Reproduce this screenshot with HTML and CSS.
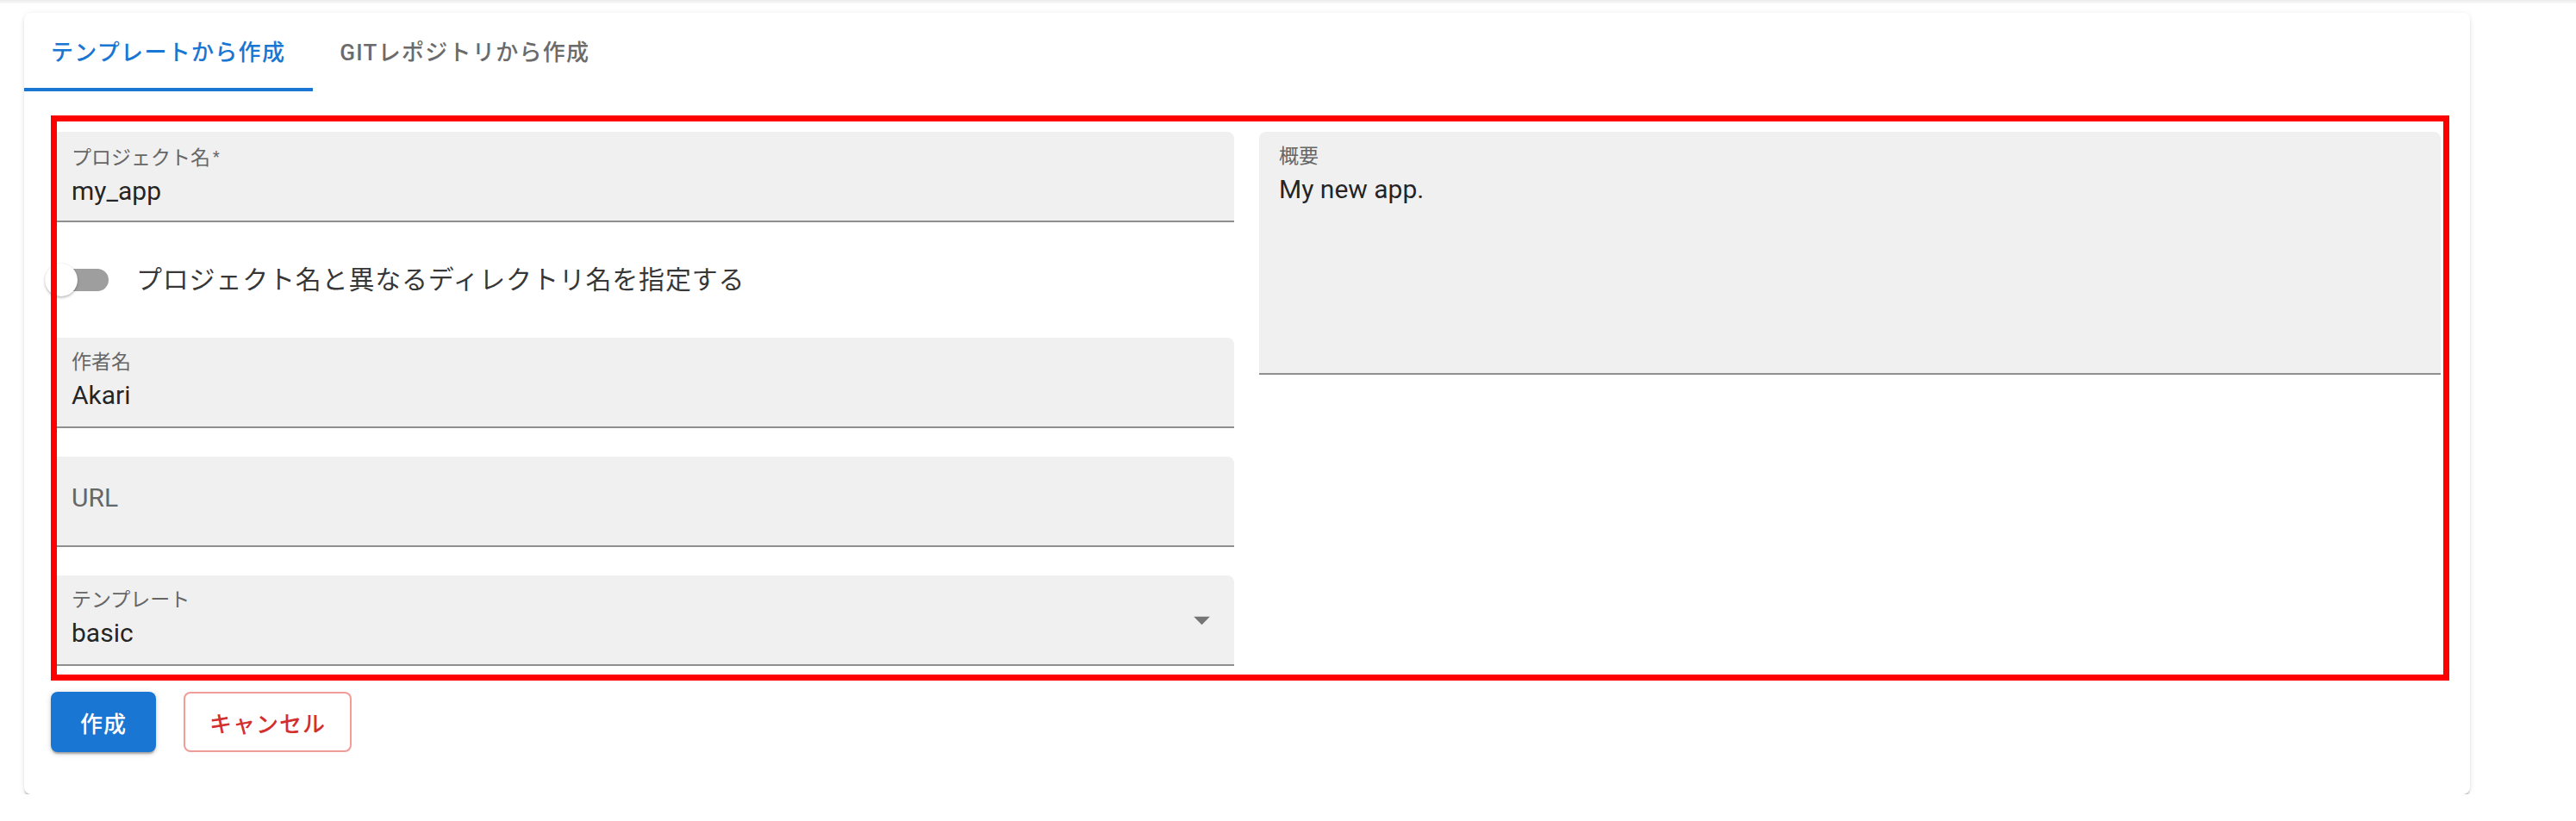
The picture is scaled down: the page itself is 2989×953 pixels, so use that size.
FILE: index.html
```html
<!DOCTYPE html>
<html lang="ja">
<head>
<meta charset="utf-8">
<title>新規プロジェクト</title>
<link rel="stylesheet" href="styles.css">
</head>
<body>
<div class="topshade"></div>
<div class="card">
  <div class="tabs">
    <div class="tab active">テンプレートから作成</div>
    <div class="tab">GITレポジトリから作成</div>
  </div>
  <div class="content">
    <div class="form">
      <div class="col">
        <div class="field">
          <span class="flabel">プロジェクト名<span class="req">*</span></span>
          <span class="fvalue">my_app</span>
        </div>
        <div class="switch-row">
          <span class="switch"><span class="track"></span><span class="thumb"></span></span>
          <span class="switch-label">プロジェクト名と異なるディレクトリ名を指定する</span>
        </div>
        <div class="field">
          <span class="flabel">作者名</span>
          <span class="fvalue">Akari</span>
        </div>
        <div class="field">
          <span class="placeholder">URL</span>
        </div>
        <div class="field select">
          <div class="select-main">
            <span class="flabel">テンプレート</span>
            <span class="fvalue">basic</span>
          </div>
          <svg class="arrow" width="45" height="45" viewBox="0 0 24 24"><path d="M7,10L12,15L17,10H7Z" fill="#757575"/></svg>
        </div>
      </div>
      <div class="col">
        <div class="field textarea">
          <span class="flabel">概要</span>
          <span class="fvalue">My new app.</span>
        </div>
      </div>
    </div>
    <div class="actions">
      <button class="btn primary">作成</button>
      <button class="btn outlined">キャンセル</button>
    </div>
  </div>
</div>
</body>
</html>
```
FILE: styles.css
```css
* { box-sizing: border-box; }
html, body {
  margin: 0;
  padding: 0;
  background: #ffffff;
  font-family: Roboto, "Noto Sans CJK JP", sans-serif;
}
.topshade {
  height: 4px;
  background: linear-gradient(#ececec, #fafafa);
}
.card {
  margin: 11px 0 0 28px;
  width: 2838px;
  height: 907px;
  background: #fff;
  border-radius: 8px;
  box-shadow: 0 3px 2px -1px rgba(0,0,0,0.25), 0 2px 4px rgba(0,0,0,0.08), 0 1px 8px rgba(0,0,0,0.06);
  display: flex;
  flex-direction: column;
}
.tabs {
  display: flex;
  height: 91px;
}
.tab {
  height: 91px;
  padding: 0 31px;
  display: flex;
  align-items: center;
  font-size: 26px;
  font-weight: 500;
  letter-spacing: 1.3px;
  color: #6b6b6b;
  border-bottom: 4px solid transparent;
}
.tab.active {
  color: #1976d2;
  border-bottom-color: #1976d2;
  padding-right: 32px;
}
.content {
  padding: 47px 34px 0 32px;
}
.form {
  position: relative;
  display: grid;
  grid-template-columns: 1372px 1371px;
  column-gap: 29px;
  align-items: start;
}
.form::after {
  content: "";
  position: absolute;
  top: -19px;
  left: -1px;
  right: -10px;
  bottom: -17px;
  border: 7px solid #ff0000;
  pointer-events: none;
  z-index: 5;
}
.col {
  display: flex;
  flex-direction: column;
}
.field {
  position: relative;
  height: 105px;
  background: #f0f0f0;
  border-radius: 8px 8px 0 0;
  border-bottom: 2px solid #8f8f8f;
  padding: 0 23px;
  display: flex;
  flex-direction: column;
}
.field + .field { margin-top: 33px; }
.switch-row + .field { margin-top: 0; }
.flabel {
  display: block;
  padding-top: 17px;
  font-size: 23px;
  line-height: 23px;
  color: #666;
}
.req {
  margin-left: 3px;
  font-size: 18px;
  vertical-align: 3px;
}
.fvalue {
  display: block;
  margin-top: 12px;
  font-size: 30px;
  line-height: 30px;
  color: rgba(0,0,0,0.87);
}
.placeholder {
  display: block;
  padding-top: 33px;
  font-size: 30px;
  line-height: 30px;
  color: #666;
}
.field.select {
  flex-direction: row;
  align-items: center;
  padding-right: 15px;
}
.select-main {
  flex: 1;
  align-self: stretch;
}
.field.textarea {
  height: 282px;
}
.switch-row {
  height: 134px;
  display: flex;
  align-items: center;
}
.switch {
  position: relative;
  width: 74px;
  height: 38px;
  margin-left: -8px;
  flex: none;
}
.track {
  position: absolute;
  left: 6px;
  top: 6px;
  width: 68px;
  height: 26px;
  border-radius: 13px;
  background: #9e9e9e;
}
.thumb {
  position: absolute;
  left: 0;
  top: 0;
  width: 38px;
  height: 38px;
  border-radius: 50%;
  background: #fff;
  box-shadow: 0 2px 3px rgba(0,0,0,0.22), 0 0 2px rgba(0,0,0,0.12);
}
.switch-label {
  margin-left: 32px;
  font-size: 30px;
  line-height: 30px;
  letter-spacing: 0.8px;
  color: rgba(0,0,0,0.8);
}
.actions {
  margin-top: 30px;
  display: flex;
  gap: 32px;
}
.btn {
  height: 70px;
  min-width: 122px;
  padding: 0 30px;
  border-radius: 8px;
  font-family: Roboto, "Noto Sans CJK JP", sans-serif;
  font-size: 26px;
  font-weight: 500;
  letter-spacing: 1px;
  cursor: pointer;
}
.btn.primary {
  margin-left: -1px;
  background: #1976d2;
  color: #fff;
  border: none;
  box-shadow: 0 3px 2px -1px rgba(0,0,0,0.25), 0 2px 4px rgba(0,0,0,0.12), 0 1px 8px rgba(0,0,0,0.1);
}
.btn.outlined {
  background: #fff;
  color: #d32f2f;
  border: 2px solid rgba(229,57,53,0.5);
  padding: 0 28px;
}
```
